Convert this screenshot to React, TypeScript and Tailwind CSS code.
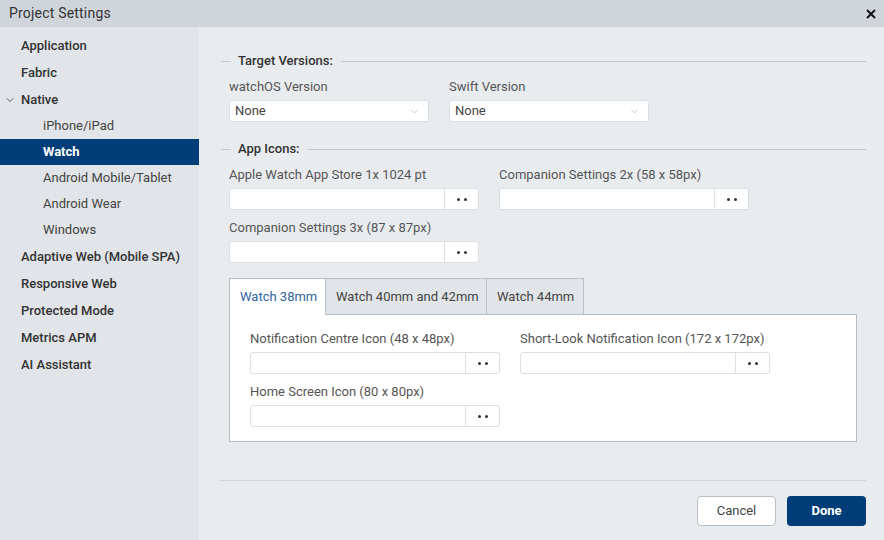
import { ChevronDown, X } from 'lucide-react'

type NavItem = { label: string; sub?: boolean; open?: boolean; active?: boolean }

const NAV: NavItem[] = [
  { label: 'Application' },
  { label: 'Fabric' },
  { label: 'Native', open: true },
  { label: 'iPhone/iPad', sub: true },
  { label: 'Watch', sub: true, active: true },
  { label: 'Android Mobile/Tablet', sub: true },
  { label: 'Android Wear', sub: true },
  { label: 'Windows', sub: true },
  { label: 'Adaptive Web (Mobile SPA)' },
  { label: 'Responsive Web' },
  { label: 'Protected Mode' },
  { label: 'Metrics APM' },
  { label: 'AI Assistant' },
]

function Sidebar() {
  return (
    <div className="w-[199px] shrink-0 bg-[#e1e4e8] pt-[5px]">
      {NAV.map((item) => (
        <div
          key={item.label}
          className={
            'relative flex items-center text-[13px] ' +
            (item.sub ? 'h-[26px] pl-[43px] ' : 'h-[27px] pl-[21px] font-medium ') +
            (item.active ? 'bg-[#003d79] text-white font-bold' : item.sub ? 'text-[#444]' : 'text-[#333]')
          }
        >
          {item.open && (
            <ChevronDown size={12} strokeWidth={1.6} className="absolute left-[4px] top-[8px] text-[#444]" />
          )}
          {item.label}
        </div>
      ))}
    </div>
  )
}

function SectionHeading({ title }: { title: string }) {
  return (
    <div className="flex items-center h-[16px]">
      <div className="ml-[2px] w-[10px] h-px bg-[#c4c9cf]" />
      <span className="ml-[7px] text-[13px] font-medium text-[#333]">{title}</span>
      <div className="ml-[8px] flex-1 h-px bg-[#c4c9cf]" />
    </div>
  )
}

function Select({ label }: { label: string }) {
  return (
    <div className="w-[200px]">
      <div className="h-[16px] leading-[16px] text-[13px] text-[#555]">{label}</div>
      <div className="mt-[5px] h-[22px] bg-white border border-[#dcdfe3] rounded-[3px] flex items-center justify-between pl-[5px] pr-[8px] text-[13px] text-[#444]">
        <span>None</span>
        <ChevronDown size={11} strokeWidth={1.2} className="text-[#999]" />
      </div>
    </div>
  )
}

function FileField({ label }: { label: string }) {
  return (
    <div className="w-[250px]">
      <div className="h-[16px] leading-[16px] text-[13px] text-[#555] whitespace-nowrap">{label}</div>
      <div className="mt-[5px] h-[22px] bg-white border border-[#dcdfe3] rounded-[3px] flex">
        <div className="flex-1" />
        <div className="w-[34px] border-l border-[#dcdfe3] flex items-center justify-center gap-[4px]">
          <span className="w-[3px] h-[3px] rounded-full bg-[#333]" />
          <span className="w-[3px] h-[3px] rounded-full bg-[#333]" />
        </div>
      </div>
    </div>
  )
}

const TABS = [
  { label: 'Watch 38mm', w: 'w-[97px]' },
  { label: 'Watch 40mm and 42mm', w: 'w-[161px]' },
  { label: 'Watch 44mm', w: 'w-[97px]' },
]

function Tabs() {
  return (
    <div className="w-[628px]">
      <div className="flex h-[37px]">
        {TABS.map((t, i) => (
          <div
            key={t.label}
            className={
              'shrink-0 whitespace-nowrap px-[10px] flex items-center text-[13px] border-t border-r border-[#b9bfc6] ' +
              t.w +
              (i === 0 ? ' border-l bg-white text-[#2f64a0]' : ' bg-[#e1e4e8] text-[#444] border-b')
            }
          >
            {t.label}
          </div>
        ))}
        <div className="flex-1 border-b border-[#b9bfc6]" />
      </div>
      <div className="bg-white border-x border-b border-[#b9bfc6] pl-[20px] pt-[16px] pb-[14px] flex flex-col gap-[10px]">
        <div className="flex gap-[20px]">
          <FileField label="Notification Centre Icon (48 x 48px)" />
          <FileField label="Short-Look Notification Icon (172 x 172px)" />
        </div>
        <FileField label="Home Screen Icon (80 x 80px)" />
      </div>
    </div>
  )
}

export default function App() {
  return (
    <div
      className="w-[884px] h-[540px] flex flex-col bg-[#e9ecef] overflow-hidden"
      style={{ fontFamily: 'Roboto, "Noto Sans", sans-serif' }}
    >
      <div className="h-[27px] shrink-0 bg-[#d0d5dc] flex items-center justify-between pl-[9px] pr-[6px]">
        <span className="text-[14px] text-[#333] tracking-[0.2px]">Project Settings</span>
        <X size={14} strokeWidth={3.2} className="text-[#111]" />
      </div>
      <div className="flex-1 flex min-h-0">
        <Sidebar />
        <div className="flex-1 flex flex-col pl-[20px] pr-[18px] pt-[26px]">
          <SectionHeading title="Target Versions:" />
          <div className="mt-[10px] pl-[10px] flex gap-[20px]">
            <Select label="watchOS Version" />
            <Select label="Swift Version" />
          </div>
          <div className="mt-[19px]">
            <SectionHeading title="App Icons:" />
          </div>
          <div className="mt-[10px] pl-[10px] flex flex-col gap-[10px]">
            <div className="flex gap-[20px]">
              <FileField label="Apple Watch App Store 1x 1024 pt" />
              <FileField label="Companion Settings 2x (58 x 58px)" />
            </div>
            <FileField label="Companion Settings 3x (87 x 87px)" />
          </div>
          <div className="mt-[15px] pl-[10px]">
            <Tabs />
          </div>
          <div className="mt-auto border-t border-[#d3d7dc] pt-[15px] pb-[14px] flex justify-end gap-[11px]">
            <button className="w-[79px] h-[30px] bg-white border border-[#b9bfc6] rounded-[4px] text-[13px] text-[#444]">
              Cancel
            </button>
            <button className="w-[79px] h-[30px] bg-[#003d79] rounded-[4px] text-[13px] font-bold text-white">
              Done
            </button>
          </div>
        </div>
      </div>
    </div>
  )
}
